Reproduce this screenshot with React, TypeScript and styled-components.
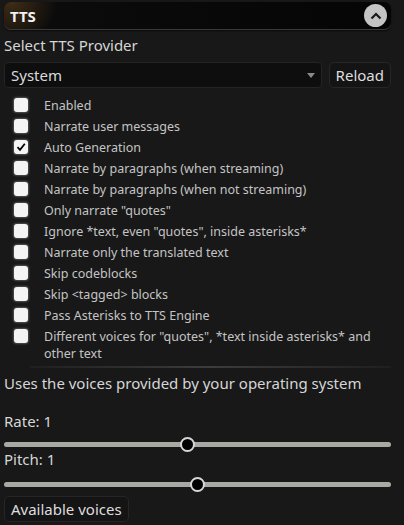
import React, { useState } from 'react';
import styled, { createGlobalStyle } from 'styled-components';

const GlobalStyle = createGlobalStyle`
  html, body {
    margin: 0;
    padding: 0;
    background: #181818;
  }
  body {
    font-family: "Noto Sans", "Open Sans", sans-serif;
    color: #d6d6d6;
  }
`;

const Panel = styled.div`
  width: 387px;
  padding: 2px 0 0 4px;
  display: flex;
  flex-direction: column;
`;

const Header = styled.div`
  height: 28px;
  box-sizing: border-box;
  display: flex;
  align-items: center;
  justify-content: space-between;
  padding: 0 4px 0 6px;
  border-radius: 7px;
  background: radial-gradient(circle at 2% 0%, #3e2c16 0%, #0b0b0b 12%, #050505 100%);
  border-bottom: 1px solid #3a3a3a;
  box-shadow: 0 1px 2px rgba(0, 0, 0, 0.6);
`;

const HeaderTitle = styled.span`
  font-size: 15px;
  font-weight: 700;
  color: #f2f2f2;
`;

const ToggleButton = styled.button`
  width: 23px;
  height: 23px;
  border-radius: 50%;
  border: none;
  padding: 0;
  background: #c4c4c4;
  display: flex;
  align-items: center;
  justify-content: center;
`;

const SectionLabel = styled.div`
  font-size: 15px;
  line-height: 20px;
  margin-top: 5px;
`;

const ProviderRow = styled.div`
  display: flex;
  gap: 7px;
  margin-top: 7px;
  height: 26px;
`;

const Select = styled.div`
  flex: 1;
  display: flex;
  align-items: center;
  justify-content: space-between;
  padding: 0 6px 0 6px;
  background: #0e0e0e;
  border: 1px solid #242424;
  border-radius: 4px;
  font-size: 15px;
  color: #dadada;
`;

const Caret = styled.span`
  width: 0;
  height: 0;
  border-left: 4px solid transparent;
  border-right: 4px solid transparent;
  border-top: 5px solid #8a8a8a;
`;

const Button = styled.button`
  font-family: inherit;
  font-size: 15px;
  color: #dedede;
  background: #141414;
  border: 1px solid #262626;
  border-radius: 5px;
  padding: 0 6px;
  height: 26px;
  line-height: 24px;
`;

const Options = styled.div`
  display: flex;
  flex-direction: column;
  gap: 4px;
  margin-top: 9px;
  padding-left: 10px;
`;

const OptionRow = styled.label`
  display: flex;
  align-items: flex-start;
  gap: 16px;
  font-size: 12.5px;
  line-height: 17px;
  color: #c4c4c4;
`;

const Box = styled.span`
  flex: none;
  width: 14px;
  height: 14px;
  margin-top: 1px;
  border-radius: 3px;
  background: #f4f4f4;
  box-shadow: 0 0 2px 1px rgba(255, 255, 255, 0.25);
  display: flex;
  align-items: center;
  justify-content: center;
`;

const Divider = styled.div`
  height: 2px;
  margin: 4px 0 0 26px;
  background: linear-gradient(90deg, rgba(60, 60, 60, 0.2), #3c3c3c 50%, rgba(60, 60, 60, 0.2));
`;

const Note = styled.div`
  font-size: 15px;
  line-height: 20px;
  margin-top: 5px;
`;

const SliderLabel = styled.div<{ $top: number }>`
  font-size: 15px;
  line-height: 20px;
  margin-top: ${p => p.$top}px;
`;

const Range = styled.input<{ $top: number }>`
  -webkit-appearance: none;
  appearance: none;
  width: 100%;
  height: 16px;
  margin: ${p => p.$top}px 0 0;
  background: transparent;
  display: block;

  &::-webkit-slider-runnable-track {
    height: 5px;
    border-radius: 3px;
    background: #a9a9a4;
  }
  &::-webkit-slider-thumb {
    -webkit-appearance: none;
    width: 15px;
    height: 15px;
    margin-top: -5px;
    border-radius: 50%;
    background: #000;
    border: 2px solid #d6d6d6;
    box-sizing: border-box;
  }
`;

const Footer = styled.div`
  margin-top: 4px;
`;

const options = [
  { label: 'Enabled', checked: false },
  { label: 'Narrate user messages', checked: false },
  { label: 'Auto Generation', checked: true },
  { label: 'Narrate by paragraphs (when streaming)', checked: false },
  { label: 'Narrate by paragraphs (when not streaming)', checked: false },
  { label: 'Only narrate "quotes"', checked: false },
  { label: 'Ignore *text, even "quotes", inside asterisks*', checked: false },
  { label: 'Narrate only the translated text', checked: false },
  { label: 'Skip codeblocks', checked: false },
  { label: 'Skip <tagged> blocks', checked: false },
  { label: 'Pass Asterisks to TTS Engine', checked: false },
  { label: 'Different voices for "quotes", *text inside asterisks* and other text', checked: false },
];

const App: React.FC = () => {
  const [rate, setRate] = useState(1);
  const [pitch, setPitch] = useState(1);

  return (
    <>
      <GlobalStyle />
      <Panel>
        <Header>
          <HeaderTitle>TTS</HeaderTitle>
          <ToggleButton>
            <svg width="12" height="8" viewBox="0 0 12 8">
              <path d="M1.5 6.5 L6 2 L10.5 6.5" fill="none" stroke="#1a1a1a" strokeWidth="2.2" />
            </svg>
          </ToggleButton>
        </Header>

        <SectionLabel>Select TTS Provider</SectionLabel>
        <ProviderRow>
          <Select>
            <span>System</span>
            <Caret />
          </Select>
          <Button>Reload</Button>
        </ProviderRow>

        <Options>
          {options.map(o => (
            <OptionRow key={o.label}>
              <Box>
                {o.checked && (
                  <svg width="10" height="10" viewBox="0 0 10 10">
                    <path d="M1.5 5.2 L4 7.8 L8.8 1.8" fill="none" stroke="#000" strokeWidth="1.8" />
                  </svg>
                )}
              </Box>
              <span>{o.label}</span>
            </OptionRow>
          ))}
        </Options>

        <Divider />

        <Note>Uses the voices provided by your operating system</Note>

        <SliderLabel $top={18}>Rate: {rate}</SliderLabel>
        <Range
          $top={5}
          type="range"
          min={0.1}
          max={2}
          step={0.1}
          value={rate}
          onChange={e => setRate(Number(e.target.value))}
        />
        <SliderLabel $top={-3}>Pitch: {pitch}</SliderLabel>
        <Range
          $top={7}
          type="range"
          min={0}
          max={2}
          step={0.1}
          value={pitch}
          onChange={e => setPitch(Number(e.target.value))}
        />
        <Footer>
          <Button>Available voices</Button>
        </Footer>
      </Panel>
    </>
  );
};

export default App;
